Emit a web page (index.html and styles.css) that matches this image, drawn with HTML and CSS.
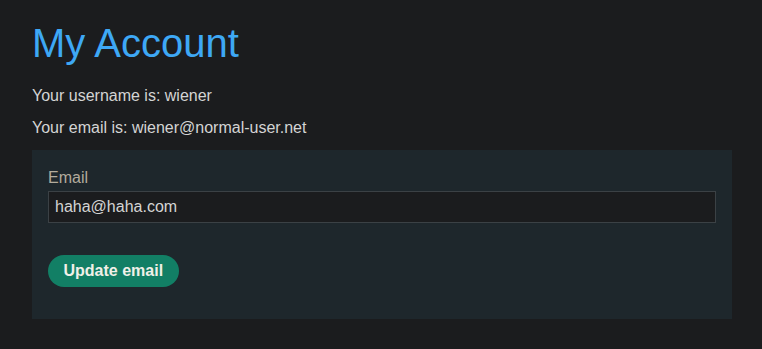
FILE: index.html
```html
<!DOCTYPE html>
<html>
<head>
<meta charset="utf-8">
<link rel="stylesheet" href="styles.css">
</head>
<body>
<main class="page">
  <h1 class="title">My Account</h1>
  <p class="info">Your username is: wiener</p>
  <p class="info">Your email is: wiener@normal-user.net</p>
  <form class="panel">
    <label class="label" for="email">Email</label>
    <input class="input" id="email" type="email" value="haha@haha.com">
    <button class="btn" type="button">Update email</button>
  </form>
</main>
</body>
</html>
```
FILE: styles.css
```css
html, body {
  margin: 0;
  padding: 0;
  background: #1b1c1e;
}
body {
  font-family: "Liberation Sans", Arial, sans-serif;
  color: #d4d4d4;
}
.page {
  padding: 20px 30px 0 32px;
  display: flex;
  flex-direction: column;
}
.title {
  margin: 0 0 18px;
  font-size: 40px;
  font-weight: normal;
  line-height: 46px;
  color: #3ea8f5;
}
.info {
  margin: 0 0 8px;
  font-size: 16px;
  line-height: 24px;
}
.panel {
  margin-top: 2px;
  background: #1e272c;
  padding: 16px 16px 32px;
  display: flex;
  flex-direction: column;
  align-items: flex-start;
}
.label {
  font-size: 16px;
  line-height: 24px;
  color: #b3ab9c;
  margin-bottom: 1px;
}
.input {
  box-sizing: border-box;
  width: 100%;
  height: 32px;
  margin: 0;
  padding: 0 6px;
  background: #1b1c1e;
  border: 1px solid #3b4145;
  color: #d4d4d4;
  font-family: "Liberation Sans", Arial, sans-serif;
  font-size: 16px;
  outline: none;
}
.btn {
  margin-top: 32px;
  height: 32px;
  padding: 0 15.5px;
  border: 0;
  border-radius: 16px;
  background: #127f65;
  color: #f0f0e8;
  font-family: "Liberation Sans", Arial, sans-serif;
  font-weight: bold;
  font-size: 16px;
}
```
